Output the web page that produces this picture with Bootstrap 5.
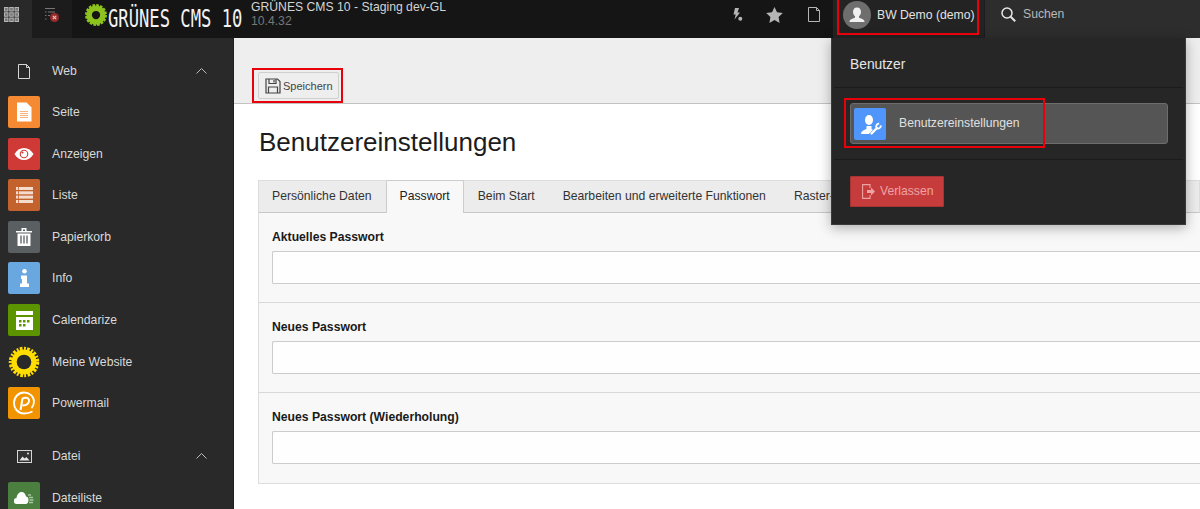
<!DOCTYPE html>
<html lang="de">
<head>
    <meta charset="UTF-8">
    <meta name="viewport" content="width=device-width, initial-scale=1.0">
    <title>Benutzereinstellungen - GRÜNES CMS 10</title>
    <link href="https://cdn.jsdelivr.net/npm/bootstrap@5.3.0/dist/css/bootstrap.min.css" rel="stylesheet">
    <style>
        html, body {
            height: 509px;
            overflow: hidden;
        }
        body {
            font-family: "Liberation Sans", Arial, sans-serif;
            font-size: 12.2px;
            background-color: #fff;
            position: relative;
        }
        /* Topbar */
        .cms-topbar {
            height: 38px;
            background-color: #151515;
            color: #d8d8d8;
        }
        .cms-modtoggle {
            width: 32px;
            padding: 0 0 9px 4px;
            background-color: #292929;
        }
        .cms-collapse {
            width: 40px;
            padding-bottom: 8px;
            background-color: #1c1c1c;
        }
        .cms-logo {
            width: 179px;
            padding-left: 13px;
            gap: 1px;
        }
        .cms-logo svg {
            margin-bottom: 8px;
        }
        .cms-logo-text {
            display: inline-block;
            width: 134px;
            font-family: "DejaVu Sans Mono", monospace;
            font-size: 24px;
            line-height: 36px;
            color: #f2f2f2;
            white-space: nowrap;
            transform: scaleX(.715);
            transform-origin: left center;
        }
        .cms-site {
            line-height: 14px;
            color: #d4d4d4;
        }
        .cms-site small {
            display: block;
            font-size: 12.2px;
            color: #777;
        }
        .cms-tool {
            width: 39px;
            padding-bottom: 9px;
        }
        .cms-tool-bolt {
            padding-right: 11px;
        }
        .cms-tool-star {
            width: 40px;
        }
        .cms-user {
            width: 151px;
            background-color: #232323;
            color: #e2e2e2;
            gap: 6px;
            padding: 0 0 8px 10px;
        }
        .cms-avatar {
            width: 28px;
            height: 28px;
            border-radius: 50%;
            background-color: #6e6e6e;
            overflow: hidden;
        }
        .cms-search {
            width: 216px;
            background-color: #2d2d2d;
            border-left: 1px solid #1c1c1c;
            color: #b9b9b9;
            padding: 0 0 10px 16px;
            gap: 7px;
        }
        /* Module menu */
        .cms-body {
            height: 471px;
        }
        .cms-sidebar {
            width: 234px;
            flex: none;
            background-color: #292929;
            border-right: 1px solid #1f1f1f;
            color: #d9d9d9;
            padding-top: 13px;
            overflow: hidden;
        }
        .cms-group {
            height: 40.3px;
            padding-left: 8px;
            padding-right: 26px;
        }
        .cms-group-gap {
            height: 42px;
            margin-top: 11px;
        }
        .cms-group-icon {
            width: 32px;
            margin-right: 12px;
        }
        .cms-mod {
            height: 41.6px;
            padding-left: 8px;
            gap: 12px;
        }
        .cms-modicon {
            width: 32px;
            height: 32px;
            border-radius: 2px;
            flex: none;
        }
        .bg-seite { background-color: #f58a33; }
        .bg-anzeigen { background-color: #cf3a36; }
        .bg-liste { background-color: #c4622e; }
        .bg-korb { background-color: #5a5f62; }
        .bg-info-mod { background-color: #68a7e0; }
        .bg-cal { background-color: #5c9400; }
        .bg-pm { background-color: #f29400; }
        .bg-datei { background-color: #4b7f3f; }
        .bg-setup { background-color: #5096fa; }
        /* Content */
        .cms-main {
            min-width: 0;
        }
        .cms-docheader {
            height: 66px;
            background-color: #eee;
            border-bottom: 1px solid #c3c3c3;
            padding: 34px 0 0 24px;
        }
        .cms-save {
            height: 27px;
            width: 81px;
            padding: 0 0 0 6px;
            font-size: 11px;
            color: #444;
            background-color: #eee;
            border: 1px solid #cfcfcf;
            border-radius: 2px;
            gap: 2px;
        }
        .cms-save span {
            padding-top: 2px;
        }
        .cms-content {
            padding-left: 24px;
        }
        .cms-title {
            margin: 23px 0 22px 1px;
            font-size: 26px;
            line-height: 31px;
            font-weight: 400;
            color: #1c1c1c;
            font-family: "Liberation Sans", Arial, sans-serif;
        }
        .cms-tabs {
            height: 33px;
            flex-wrap: nowrap;
            background-color: #ececec;
            border: 1px solid #ddd;
            border-bottom: 1px solid #c8c8c8;
        }
        .cms-tabs .nav-link {
            height: 32px;
            padding: 8px 14px 0;
            margin: -1px 0 0;
            font-size: 12.2px;
            line-height: 16px;
            color: #333;
            border: 0;
            border-radius: 0;
            white-space: nowrap;
        }
        .cms-tabs .nav-item:first-child .nav-link {
            padding-left: 13px;
        }
        .cms-tabs .nav-link.active {
            color: #222;
            background-color: #f8f8f8;
            border: 1px solid #ccc;
            border-bottom: 0;
            height: 33px;
            padding: 7px 13px 0;
            border-radius: 2px 2px 0 0;
        }
        .cms-panel {
            background-color: #f8f8f8;
            border: 1px solid #ddd;
            border-top: 0;
            border-right: 0;
        }
        .cms-field {
            height: 90px;
            padding: 16px 0 0 13px;
            border-bottom: 1px solid #d8d8d8;
        }
        .cms-field:last-child {
            border-bottom: 0;
        }
        .cms-field .form-label {
            margin-bottom: 6px;
            font-size: 12.2px;
            line-height: 16px;
            font-weight: 700;
            color: #1a1a1a;
        }
        .cms-field .form-control {
            height: 33px;
            background-color: #fefefe;
            border: 1px solid #ccc;
            border-right: 0;
            border-radius: 2px 0 0 2px;
        }
        /* User dropdown */
        .cms-usermenu {
            position: absolute;
            top: 38px;
            left: 831px;
            width: 355px;
            height: 187px;
            background-color: #262626;
            border: 1px solid #3a3a3a;
            border-top: 0;
            box-shadow: 0 3px 12px rgba(0, 0, 0, .3);
            color: #e6e6e6;
        }
        .cms-usermenu .dropdown-header {
            height: 49px;
            padding: 19px 0 0 18px;
            font-size: 13.8px;
            line-height: 15px;
            color: #e6e6e6;
        }
        .cms-usermenu .dropdown-divider {
            height: 0;
            margin: 0 2px;
            border: 0;
            border-top: 1px solid #1b1b1b;
            opacity: 1;
        }
        .cms-usermenu .dropdown-item {
            width: 318px;
            height: 41px;
            margin: 15px 0 15px 18px;
            padding: 0 0 0 3px;
            gap: 13px;
            font-size: 12.2px;
            color: #e0e0e0;
            background-color: #555;
            border: 1px solid #6d6d6d;
            border-radius: 3px;
        }
        .cms-logout {
            height: 31px;
            margin: 16px 0 0 18px;
            padding: 0 0 0 11px;
            width: 94px;
            gap: 4px;
            font-size: 12.2px;
            color: #eda3a3;
            background-color: #c63c3c;
            border: 1px solid #a83333;
            border-radius: 1px;
        }
        /* Red annotation frames */
        .cms-mark {
            position: absolute;
            border: 2px solid #e8000b;
            pointer-events: none;
        }
        .cms-mark-save { left: 252px; top: 68px; width: 91px; height: 35px; }
        .cms-mark-user { left: 837px; top: -2px; width: 142px; height: 37px; }
        .cms-mark-item { left: 844px; top: 98px; width: 201px; height: 50px; }
    </style>
</head>
<body>
    <!-- Topbar -->
    <header class="cms-topbar d-flex align-items-stretch">
        <div class="cms-modtoggle d-flex align-items-center">
            <svg width="15" height="15" viewBox="0 0 15 15" fill="#777" stroke="#b5b5b5">
                <rect x=".5" y=".5" width="3.5" height="3.5"/><rect x="5.75" y=".5" width="3.5" height="3.5"/><rect x="11" y=".5" width="3.5" height="3.5"/>
                <rect x=".5" y="5.75" width="3.5" height="3.5"/><rect x="5.75" y="5.75" width="3.5" height="3.5"/><rect x="11" y="5.75" width="3.5" height="3.5"/>
                <rect x=".5" y="11" width="3.5" height="3.5"/><rect x="5.75" y="11" width="3.5" height="3.5"/><rect x="11" y="11" width="3.5" height="3.5"/>
            </svg>
        </div>
        <div class="cms-collapse d-flex align-items-center justify-content-center">
            <svg width="16" height="16" viewBox="0 0 16 16">
                <path d="M1 1.500h10M1 5h1.500M1 8.500h1.500M1 12h1.500M4 5h7M4 8.500h2" stroke="#777" fill="none"/>
                <circle cx="10.500" cy="10.500" r="4.500" fill="#9a2b2b"/>
                <path d="M8.800 8.800l3.400 3.400M12.200 8.800l-3.400 3.400" stroke="#e4c0c0" stroke-width="1.200"/>
            </svg>
        </div>
        <div class="cms-logo d-flex align-items-center">
            <svg width="22" height="22" viewBox="0 0 24 24" class="flex-shrink-0">
                <circle cx="12" cy="12" r="7.500" fill="none" stroke="#8dc21f" stroke-width="6"/>
                <circle cx="12" cy="12" r="10.500" fill="none" stroke="#8dc21f" stroke-width="3" stroke-dasharray="2.800 1.320"/>
            </svg>
            <span class="cms-logo-text">GRÜNES CMS 10</span>
        </div>
        <div class="cms-site flex-grow-1">
            GRÜNES CMS 10 - Staging dev-GL
            <small>10.4.32</small>
        </div>
        <div class="cms-tool cms-tool-bolt d-flex align-items-center justify-content-end">
            <svg width="11" height="16" viewBox="0 0 11 16" fill="#b5b5b5">
                <path d="M3 1h4L5.500 5.500H8L2.500 12.500l1.200-5H1.500z"/><circle cx="8.300" cy="11.800" r="2"/>
            </svg>
        </div>
        <div class="cms-tool cms-tool-star d-flex align-items-center justify-content-center">
            <svg width="17" height="16" viewBox="0 0 17 16" fill="#b5b5b5">
                <path d="M8.500 0l2.500 5.300 5.800.8-4.200 4 1 5.800-5.100-2.800-5.100 2.800 1-5.800-4.200-4 5.800-.8z"/>
            </svg>
        </div>
        <div class="cms-tool d-flex align-items-center justify-content-center">
            <svg width="14" height="15" viewBox="0 0 14 15" fill="none" stroke="#b5b5b5">
                <path d="M1.500.5h8l3 3v11h-11zM9.500.5v3h3"/>
            </svg>
        </div>
        <div class="cms-user d-flex align-items-center">
            <span class="cms-avatar d-block flex-shrink-0">
                <svg width="28" height="28" viewBox="0 0 28 28" fill="#f1f1f1">
                    <path d="M14 6.500c2.700 0 4 2 4 4.300 0 1.900-.9 3.600-2 4.500v1.500c2.600.8 5.500 1.700 5.500 4.200H6.500c0-2.500 2.900-3.400 5.500-4.200v-1.500c-1.100-.9-2-2.600-2-4.500 0-2.300 1.300-4.300 4-4.300z"/>
                </svg>
            </span>
            <span class="text-nowrap">BW Demo (demo)</span>
        </div>
        <div class="cms-search d-flex align-items-center">
            <svg width="15" height="15" viewBox="0 0 15 15" fill="none" stroke="#e8e8e8" stroke-width="1.500">
                <circle cx="6" cy="6" r="5"/><path d="M9.700 9.700l4.500 4.500" stroke-width="2"/>
            </svg>
            <span>Suchen</span>
        </div>
    </header>

    <div class="cms-body d-flex">
        <!-- Module menu -->
        <aside class="cms-sidebar">
            <div class="cms-group d-flex align-items-center">
                <span class="cms-group-icon d-flex justify-content-center">
                    <svg width="14" height="15" viewBox="0 0 14 15" fill="none" stroke="#d6d6d6">
                        <path d="M1.500.5h8l3 3v11h-11zM9.500.5v3h3"/>
                    </svg>
                </span>
                <span class="flex-grow-1">Web</span>
                <svg width="11" height="6" viewBox="0 0 11 6" fill="none" stroke="#bbb"><path d="M.5 5.500l5-5 5 5"/></svg>
            </div>
            <div class="cms-mod d-flex align-items-center">
                <span class="cms-modicon bg-seite d-flex align-items-center justify-content-center">
                    <svg width="16" height="20" viewBox="0 0 16 20"><path d="M1 .500h9.500l5 5v14H1z" fill="#fff"/><path d="M4 9.500h8M4 11.500h8M4 13.500h8M4 15.500h8" stroke="#f9b27a"/></svg>
                </span>
                <span>Seite</span>
            </div>
            <div class="cms-mod d-flex align-items-center">
                <span class="cms-modicon bg-anzeigen d-flex align-items-center justify-content-center">
                    <svg width="20" height="14" viewBox="0 0 20 14"><path d="M.5 7C3 3 6 1 10 1s7 2 9.500 6c-2.500 4-5.500 6-9.500 6S3 11 .5 7z" fill="#fff"/><circle cx="10" cy="7" r="4.300" fill="#cf3a36"/><circle cx="10" cy="7" r="3.200" fill="#fff"/><circle cx="8.500" cy="5.500" r="1.100" fill="#cf3a36"/></svg>
                </span>
                <span>Anzeigen</span>
            </div>
            <div class="cms-mod d-flex align-items-center">
                <span class="cms-modicon bg-liste d-flex align-items-center justify-content-center">
                    <svg width="17" height="16" viewBox="0 0 17 16" fill="#f3dccd"><rect y="0" width="17" height="3"/><rect y="4.300" width="17" height="3"/><rect y="8.600" width="17" height="3"/><rect y="13" width="17" height="3"/><path d="M2.500 0v16" stroke="#c4622e" stroke-width=".8"/></svg>
                </span>
                <span>Liste</span>
            </div>
            <div class="cms-mod d-flex align-items-center">
                <span class="cms-modicon bg-korb d-flex align-items-center justify-content-center">
                    <svg width="16" height="18" viewBox="0 0 16 18"><path d="M0 3h16v1.500H0zM5.500 0h5v3h-1.500V1.500h-2V3H5.500z" fill="#fff"/><path d="M1.500 5.500h13V18h-13z" fill="#fff"/><path d="M5 7.500v8M8 7.500v8M11 7.500v8" stroke="#5a5f62" stroke-width="1.300"/></svg>
                </span>
                <span>Papierkorb</span>
            </div>
            <div class="cms-mod d-flex align-items-center">
                <span class="cms-modicon bg-info-mod d-flex align-items-center justify-content-center">
                    <svg width="9" height="18" viewBox="0 0 9 18" fill="#fff"><circle cx="4.500" cy="2.300" r="2.300"/><path d="M1 6.500h6v8h2V18H0v-3.500h2V10H1z"/></svg>
                </span>
                <span>Info</span>
            </div>
            <div class="cms-mod d-flex align-items-center">
                <span class="cms-modicon bg-cal d-flex align-items-center justify-content-center">
                    <svg width="17" height="19" viewBox="0 0 17 19" fill="#fff"><rect width="17" height="4"/><path d="M0 6h17v13H0z"/><g fill="#5c9400"><rect x="3" y="9" width="2.500" height="2.500"/><rect x="7" y="9" width="2.500" height="2.500"/><rect x="11" y="9" width="2.500" height="2.500"/><rect x="3" y="13" width="2.500" height="2.500"/><rect x="7" y="13" width="2.500" height="2.500"/></g></svg>
                </span>
                <span>Calendarize</span>
            </div>
            <div class="cms-mod d-flex align-items-center">
                <span class="cms-modicon d-block">
                    <svg width="32" height="32" viewBox="0 0 32 32">
                        <circle cx="16" cy="16" r="12.500" fill="#ffdd00"/>
                        <circle cx="16" cy="16" r="13" fill="none" stroke="#ffdd00" stroke-width="4.500" stroke-dasharray="2.600 1.500 1.800 1.200"/>
                        <circle cx="16" cy="16" r="7.300" fill="#292929"/>
                    </svg>
                </span>
                <span>Meine Website</span>
            </div>
            <div class="cms-mod d-flex align-items-center">
                <span class="cms-modicon bg-pm d-flex align-items-center justify-content-center">
                    <svg width="24" height="24" viewBox="0 0 24 24" fill="none" stroke="#fff" stroke-width="1.800">
                        <path d="M20.500 20.500c-2.500 1.300-5.500 2-8.500 2C6.500 22.500 2 18 2 12S6.500 1.500 12 1.500 22 5.500 22 10.500c0 3-1 5-2.500 6.500"/>
                        <path d="M8.500 19l2-11.500c2.500-1.500 6-1 6.500 1.500s-1.500 5.500-6.500 5.500" stroke-width="2"/>
                    </svg>
                </span>
                <span>Powermail</span>
            </div>
            <div class="cms-group cms-group-gap d-flex align-items-center">
                <span class="cms-group-icon d-flex justify-content-center">
                    <svg width="15" height="13" viewBox="0 0 15 13"><rect x=".5" y=".5" width="14" height="12" fill="#333" stroke="#d6d6d6"/><path d="M2.500 10.500l3-4 2 2 2-1.500 3 3.500z" fill="#e8e8e8"/><circle cx="11" cy="3.500" r="1" fill="#e8e8e8"/></svg>
                </span>
                <span class="flex-grow-1">Datei</span>
                <svg width="11" height="6" viewBox="0 0 11 6" fill="none" stroke="#bbb"><path d="M.5 5.500l5-5 5 5"/></svg>
            </div>
            <div class="cms-mod d-flex align-items-center">
                <span class="cms-modicon bg-datei d-flex align-items-center justify-content-center">
                    <svg width="20" height="12" viewBox="0 0 20 12"><path d="M3 12a3 3 0 0 1-.5-6C3 2.500 5 0 7.500 0S11.500 2 12 4.500c1.500 0 2.500 1.500 2.500 3.500S13.500 12 12 12z" fill="#fff"/><path d="M14 3h3M15 5.500h4M15.500 8h4M15 10.500h4" stroke="#a9c6a1" stroke-width="1.500"/></svg>
                </span>
                <span>Dateiliste</span>
            </div>
        </aside>

        <!-- Content -->
        <main class="cms-main flex-grow-1">
            <div class="cms-docheader">
                <button type="button" class="cms-save btn d-inline-flex align-items-center">
                    <svg width="16" height="16" viewBox="0 0 16 16" fill="none" stroke="#444" stroke-width="1.200">
                        <path d="M1 1h11.500L15 3.500V15H1z"/><path d="M4 1v4.500h7V1M9 2v2.500"/><path d="M3.500 15V9h9v6"/>
                    </svg>
                    <span>Speichern</span>
                </button>
            </div>
            <div class="cms-content">
                <h1 class="cms-title">Benutzereinstellungen</h1>
                <ul class="nav cms-tabs">
                    <li class="nav-item"><a class="nav-link" href="#">Persönliche Daten</a></li>
                    <li class="nav-item"><a class="nav-link active" href="#">Passwort</a></li>
                    <li class="nav-item"><a class="nav-link" href="#">Beim Start</a></li>
                    <li class="nav-item"><a class="nav-link" href="#">Bearbeiten und erweiterte Funktionen</a></li>
                    <li class="nav-item"><a class="nav-link" href="#">Raster-Ansicht</a></li>
                </ul>
                <div class="cms-panel">
                    <div class="cms-field">
                        <label class="form-label d-block" for="pwCurrent">Aktuelles Passwort</label>
                        <input type="password" class="form-control" id="pwCurrent">
                    </div>
                    <div class="cms-field">
                        <label class="form-label d-block" for="pwNew">Neues Passwort</label>
                        <input type="password" class="form-control" id="pwNew">
                    </div>
                    <div class="cms-field">
                        <label class="form-label d-block" for="pwRepeat">Neues Passwort (Wiederholung)</label>
                        <input type="password" class="form-control" id="pwRepeat">
                    </div>
                </div>
            </div>
        </main>
    </div>

    <!-- User dropdown -->
    <div class="cms-usermenu">
        <div class="dropdown-header">Benutzer</div>
        <hr class="dropdown-divider">
        <a class="dropdown-item d-flex align-items-center" href="#">
            <span class="cms-modicon bg-setup d-flex align-items-center justify-content-center">
                <svg width="24" height="24" viewBox="0 0 24 24" fill="#fff">
                    <ellipse cx="11" cy="8" rx="4" ry="5"/>
                    <path d="M3 22c0-3 3.500-4.200 5.500-5v-3h5v3l1.500.7-4.200 4.300z"/>
                    <path d="M13.500 21.500l5.500-5.500" stroke="#fff" stroke-width="2.400" stroke-linecap="round"/>
                    <path d="M18.200 15.500a3 3 0 0 1 3-3.800M19 16.500a3 3 0 0 0 3.800-3.200" fill="none" stroke="#fff" stroke-width="1.800"/>
                </svg>
            </span>
            Benutzereinstellungen
        </a>
        <hr class="dropdown-divider">
        <button type="button" class="cms-logout btn d-flex align-items-center">
            <svg width="14" height="15" viewBox="0 0 14 15" fill="none" stroke="#eda3a3" stroke-width="1.100">
                <path d="M8 4V.6H.6v13.800H8V11"/><path d="M5 6h4V3.500l4 4-4 4V9H5z" fill="#eda3a3" stroke="none"/>
            </svg>
            Verlassen
        </button>
    </div>

    <!-- Red annotation frames -->
    <div class="cms-mark cms-mark-save"></div>
    <div class="cms-mark cms-mark-user"></div>
    <div class="cms-mark cms-mark-item"></div>
</body>
</html>
